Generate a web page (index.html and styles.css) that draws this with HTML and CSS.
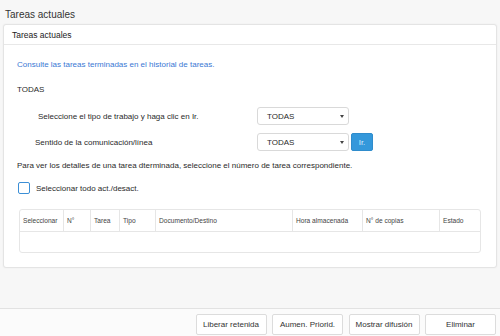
FILE: index.html
```html
<!DOCTYPE html>
<html lang="es">
<head>
  <meta charset="UTF-8" />
  <meta name="viewport" content="width=device-width, initial-scale=1.0"/>
  <title>Tareas actuales</title>
  <link rel="stylesheet" href="styles.css">
</head>
<body>
  <div class="page">
    <div class="page-title">Tareas actuales</div>

    <div class="panel">
      <div class="panel-head">Tareas actuales</div>
      <div class="panel-body">
        <a class="history-link" href="#">Consulte las tareas terminadas en el historial de tareas.</a>
        <div class="current">TODAS</div>

        <div class="filter-row">
          <label class="filter-label first">Seleccione el tipo de trabajo y haga clic en Ir.</label>
          <div class="select">TODAS<span class="caret"></span></div>
        </div>
        <div class="filter-row second">
          <label class="filter-label">Sentido de la comunicación/línea</label>
          <div class="select">TODAS<span class="caret"></span></div>
          <button class="go">Ir.</button>
        </div>

        <p class="hint">Para ver los detalles de una tarea dterminada, seleccione el número de tarea correspondiente.</p>

        <label class="check-all"><span class="box"></span>Seleccionar todo act./desact.</label>

        <div class="table-wrap">
          <table>
            <thead>
              <tr>
                <th class="c-sel">Seleccionar</th>
                <th class="c-no">N°</th>
                <th class="c-task">Tarea</th>
                <th class="c-type">Tipo</th>
                <th class="c-doc">Documento/Destino</th>
                <th class="c-time">Hora almacenada</th>
                <th class="c-copies">N° de copias</th>
                <th>Estado</th>
              </tr>
            </thead>
            <tbody>
              <tr><td colspan="8"></td></tr>
            </tbody>
          </table>
        </div>
      </div>
    </div>

    <div class="footer">
      <button class="action">Liberar retenida</button>
      <button class="action">Aumen. Priorid.</button>
      <button class="action">Mostrar difusión</button>
      <button class="action">Eliminar</button>
    </div>
  </div>
</body>
</html>
```

FILE: styles.css
```css
body {
  margin: 0;
  font-family: "Liberation Sans", Arial, sans-serif;
  color: #333;
  background: #f7f7f7;
}
.page {
  height: 336px;
  display: flex;
  flex-direction: column;
}
.page-title {
  height: 24px;
  line-height: 30px;
  padding-left: 5px;
  font-size: 10px;
  color: #333;
}
.panel {
  margin: 0 3px 0 3px;
  background: #fff;
  border: 1px solid #e4e4e4;
  border-radius: 3px;
  box-shadow: 0 0 2px rgba(0, 0, 0, 0.06);
}
.panel-head {
  height: 19px;
  line-height: 21px;
  padding-left: 8px;
  font-size: 8.5px;
  color: #222;
  border-bottom: 1px solid #e8e8e8;
}
.panel-body {
  display: flex;
  flex-direction: column;
  padding: 14px 14px 14px 13px;
  font-size: 8px;
}
.history-link {
  line-height: 12px;
  color: #3a78d4;
  text-decoration: none;
}
.current {
  margin-top: 13px;
  line-height: 12px;
  color: #2a2a2a;
}
.filter-row {
  margin-top: 11px;
  display: flex;
  align-items: center;
  height: 18px;
}
.filter-row.second {
  margin-top: 8px;
}
.filter-label {
  width: 222px;
  padding-left: 18px;
  color: #2a2a2a;
}
.filter-label.first {
  padding-left: 21px;
  width: 219px;
}
.select {
  position: relative;
  box-sizing: border-box;
  width: 92px;
  height: 18px;
  line-height: 17px;
  padding-left: 9px;
  border: 1px solid #d9d9d9;
  border-radius: 3px;
  background: #fff;
  color: #2a2a2a;
}
.caret {
  position: absolute;
  right: 4px;
  top: 7px;
  border-left: 2px solid transparent;
  border-right: 2px solid transparent;
  border-top: 3px solid #444;
}
.go {
  margin-left: 2px;
  width: 22px;
  height: 18px;
  padding: 0;
  border: 1px solid #2f8ccc;
  border-radius: 2px;
  background: #3498db;
  color: #dcefff;
  font-family: inherit;
  font-size: 7.8px;
}
.hint {
  margin: 9px 0 0 0;
  line-height: 12px;
  color: #2a2a2a;
}
.check-all {
  margin-top: 10px;
  display: flex;
  align-items: center;
  height: 12px;
  color: #2a2a2a;
}
.box {
  box-sizing: border-box;
  width: 12px;
  height: 12px;
  margin: 0 6px 0 1px;
  border: 1.5px solid #3c8fd6;
  border-radius: 2px;
}
.table-wrap {
  margin: 15px 1px 0 2px;
  border: 1px solid #e6e6e6;
  border-radius: 3px;
  overflow: hidden;
}
table {
  width: 100%;
  border-collapse: collapse;
  font-size: 6.6px;
  color: #444;
}
th {
  height: 21px;
  padding: 0 0 0 3px;
  text-align: left;
  font-weight: normal;
  border-left: 1px solid #e6e6e6;
  border-bottom: 1px solid #e6e6e6;
}
th:first-child {
  border-left: none;
}
td {
  height: 18px;
}
.c-sel { width: 40px; }
.c-no { width: 23px; }
.c-task { width: 25px; }
.c-type { width: 32px; }
.c-doc { width: 133px; }
.c-time { width: 66px; }
.c-copies { width: 73px; }
.footer {
  margin-top: auto;
  height: 28px;
  display: flex;
  justify-content: flex-end;
  gap: 5.5px;
  padding: 5px 4px 0 0;
  box-sizing: border-box;
  border-top: 1px solid #e2e2e2;
  background: #fbfbfb;
}
.action {
  width: 71px;
  height: 21px;
  padding: 0;
  border: 1px solid #dcdcdc;
  border-radius: 2px;
  background: #fff;
  color: #333;
  font-family: inherit;
  font-size: 8px;
}
```
